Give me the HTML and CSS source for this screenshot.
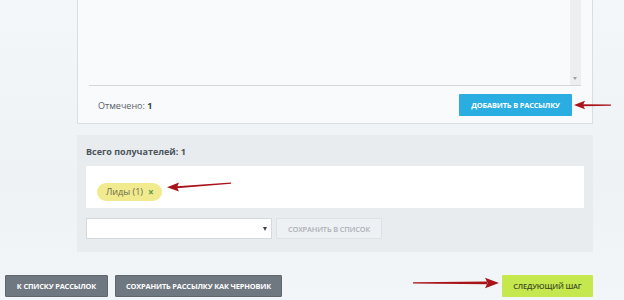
FILE: index.html
```html
<!DOCTYPE html>
<html lang="ru">
<head>
  <meta charset="UTF-8" />
  <title>Рассылка — получатели</title>
  <link rel="stylesheet" href="styles.css">
</head>
<body>

  <div class="page">
    <section class="picked">
      <div class="list">
        <div class="scroll"><span class="scroll-down"></span></div>
      </div>
      <div class="picked-foot">
        <span class="count">Отмечено: <b>1</b></span>
        <button class="btn btn-blue">Добавить в рассылку</button>
      </div>
    </section>

    <section class="total">
      <div class="total-title">Всего получателей: 1</div>
      <div class="tags">
        <span class="tag">Лиды (1) <span class="tag-x">&#215;</span></span>
      </div>
      <div class="save-row">
        <div class="select"><span class="select-arrow"></span></div>
        <button class="btn btn-off">Сохранить в список</button>
      </div>
    </section>
  </div>

  <div class="actions">
    <button class="btn btn-grey btn-back">К списку рассылок</button>
    <button class="btn btn-grey btn-draft">Сохранить рассылку как черновик</button>
    <button class="btn btn-green">Следующий шаг</button>
  </div>

  <!-- red arrows drawn over the screen -->
  <svg class="arrow arrow-add" width="40" height="10" viewBox="0 0 40 10">
    <path d="M9 4.2 L37 4.6 L37 5.8 L9 6.2 Z" fill="#a8141a"/>
    <path d="M0 5 L11 0.8 L9 5 L11 9.2 Z" fill="#a8141a"/>
  </svg>
  <svg class="arrow arrow-tag" width="66" height="12" viewBox="0 0 66 12">
    <path d="M10 6.2 L64 2.4 L64 3.8 L10 8.2 Z" fill="#a8141a"/>
    <path d="M0 7.2 L12 2.6 L10 7.2 L12 11.6 Z" fill="#a8141a"/>
  </svg>
  <svg class="arrow arrow-next" width="86" height="12" viewBox="0 0 86 12">
    <path d="M0 5.2 L74 4.6 L74 7.2 L0 6.6 Z" fill="#a8141a"/>
    <path d="M86 6 L72 0.8 L74.5 6 L72 11.2 Z" fill="#a8141a"/>
  </svg>

</body>
</html>
```

FILE: styles.css
```css
body {
  margin: 0;
  height: 300px;
  overflow: hidden;
  font-family: "Open Sans", Arial, sans-serif;
  color: #4a4f54;
  background: linear-gradient(180deg, #f4f7f9 0%, #eef2f5 60%, #f3f6f8 100%);
  position: relative;
}
.page {
  margin-left: 77px;
  width: 516px;
}
.picked {
  margin-top: -1px;
  border: 1px solid #d9dee2;
  background: #f8fafc;
  padding: 0 11px;
}
.list {
  height: 85px;
  border-bottom: 1px solid #d2d7dc;
  display: flex;
  justify-content: flex-end;
}
.scroll {
  width: 11px;
  background: #eceef0;
  position: relative;
}
.scroll-down {
  position: absolute;
  left: 3px;
  bottom: 5px;
  border-left: 2.5px solid transparent;
  border-right: 2.5px solid transparent;
  border-top: 3px solid #9aa0a5;
}
.picked-foot {
  display: flex;
  align-items: center;
  justify-content: space-between;
  padding: 8px 9px 7px;
}
.count {
  font-size: 9px;
  color: #5a5f64;
}
.count b {
  color: #3a3f44;
}
.btn {
  font-family: "Open Sans", Arial, sans-serif;
  font-size: 7.4px;
  font-weight: 700;
  text-transform: uppercase;
  letter-spacing: -0.15px;
  white-space: nowrap;
  height: 22px;
  padding: 0;
  border: none;
  border-radius: 1px;
  cursor: pointer;
}
.btn-blue {
  width: 113px;
  background: #2aaee2;
  color: #ffffff;
}
.total {
  margin-top: 11px;
  background: #e8ecef;
  padding: 10px 9px 13px;
}
.total-title {
  font-size: 9px;
  font-weight: 700;
  color: #4c545b;
  line-height: 14px;
}
.tags {
  margin-top: 7px;
  height: 42px;
  background: #ffffff;
  padding: 12px 11px 0;
  box-sizing: border-box;
}
.tag {
  display: inline-flex;
  align-items: center;
  gap: 5px;
  height: 18px;
  padding: 0 8px 0 9px;
  border-radius: 9px;
  background: #f1ea8e;
  font-size: 9px;
  color: #6a6a4a;
}
.tag-x {
  color: #4f9a45;
  font-weight: 700;
  font-size: 10px;
}
.save-row {
  display: flex;
  gap: 4px;
  margin-top: 10px;
}
.select {
  width: 186px;
  height: 21px;
  box-sizing: border-box;
  background: #ffffff;
  border: 1px solid #d4d9dd;
  position: relative;
}
.select-arrow {
  position: absolute;
  right: 4px;
  top: 8px;
  border-left: 2.5px solid transparent;
  border-right: 2.5px solid transparent;
  border-top: 4px solid #3e4348;
}
.btn-off {
  width: 106px;
  height: 21px;
  background: #eef1f3;
  border: 1px solid #dce1e5;
  color: #a9b0b6;
  font-weight: 600;
}
.actions {
  display: flex;
  gap: 7px;
  margin-top: 23px;
  padding: 0 31px 0 5px;
}
.btn-grey {
  background: #6f7881;
  color: #ffffff;
  border: 1px solid #5f676f;
}
.btn-back {
  width: 103px;
}
.btn-draft {
  width: 167px;
}
.btn-green {
  margin-left: auto;
  width: 91px;
  background: #c6e84f;
  color: #3e4a22;
  font-weight: 600;
}
.arrow {
  position: absolute;
}
.arrow-add {
  left: 574px;
  top: 100px;
}
.arrow-tag {
  left: 167px;
  top: 180px;
}
.arrow-next {
  left: 413px;
  top: 277px;
}
```
